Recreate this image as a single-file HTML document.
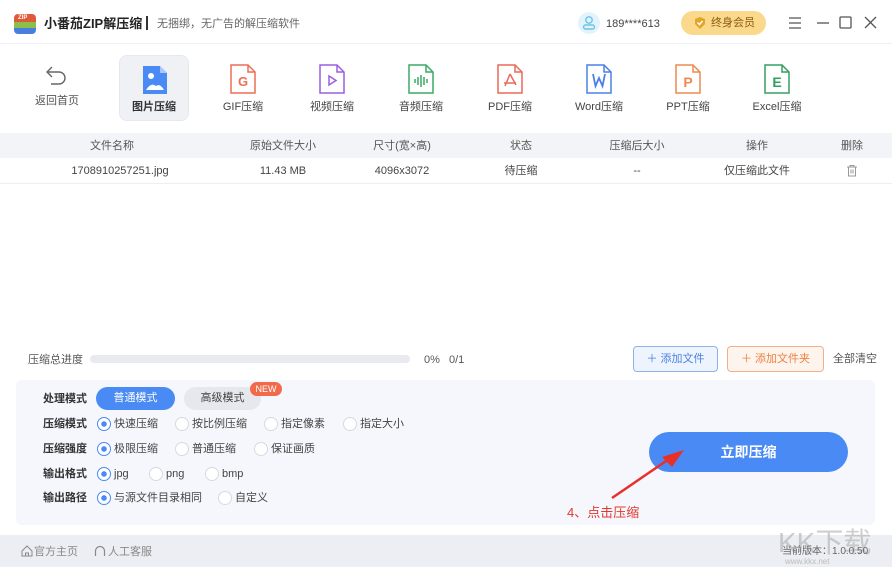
<!DOCTYPE html>
<html><head><meta charset="utf-8"><style>
*{margin:0;padding:0;box-sizing:border-box}
body{width:892px;height:567px;overflow:hidden;background:#fff;font-family:"Liberation Sans","Noto Sans CJK SC",sans-serif;font-size:12px;color:#333;position:relative}
.a{position:absolute}
.tb{left:0;top:0;width:892px;height:44px;background:#fff;border-bottom:1px solid #eef0f4}
.tool{position:absolute;top:55px;width:70px;height:66px;text-align:center}
.tool svg{position:absolute;left:21px;top:8px}
.tool span{position:absolute;left:0;right:0;top:45px;font-size:11px;color:#444;line-height:14px}
.th{top:133px;left:0;width:892px;height:25px;background:#f3f4f7;color:#555}
.row{top:158px;left:0;width:892px;height:26px;border-bottom:1px solid #eceef2;color:#444}
.c{position:absolute;top:6px;transform:translateX(-50%);white-space:nowrap;font-size:11px;line-height:14px}
.lbl{position:absolute;left:43px;font-weight:bold;font-size:11px;color:#333;line-height:14px}
.r{position:absolute;font-size:11px;color:#444;padding-left:17px;white-space:nowrap;line-height:14px}
.r:before{content:"";position:absolute;left:0;top:0;width:12px;height:12px;border:1px solid #d6d9e0;border-radius:50%;background:#fff}
.r.on:before{border-color:#4a8af4;background:radial-gradient(circle,#4a8af4 0 2.5px,#fff 3px)}
</style></head><body>
<div class="a tb"></div>
<div class="a" style="left:14px;top:14px;width:22px;height:20px;border-radius:4px;background:linear-gradient(#e05a3a 0 40%,#8bbf4a 40% 70%,#4a7de0 70%)"></div>
<div class="a" style="left:18px;top:15px;font-size:6px;color:#fff;font-weight:bold">ZIP</div>
<div class="a" style="left:44px;top:16px;font-size:13px;font-weight:bold;color:#222;line-height:16px">小番茄ZIP解压缩</div>
<div class="a" style="left:146px;top:16px;width:2px;height:14px;background:#333"></div>
<div class="a" style="left:157px;top:17px;font-size:11px;color:#666;line-height:14px">无捆绑，无广告的解压缩软件</div>
<div class="a" style="left:578px;top:12px;width:22px;height:22px;border-radius:50%;background:#e3f3fb"></div>
<svg class="a" style="left:582px;top:15px" width="14" height="15"><circle cx="7" cy="5" r="3.2" fill="none" stroke="#6cc3e8" stroke-width="1.4"/><rect x="1.5" y="10" width="11" height="4" rx="2" fill="none" stroke="#6cc3e8" stroke-width="1.4"/></svg>
<div class="a" style="left:606px;top:17px;font-size:11px;color:#444;line-height:14px">189****613</div>
<div class="a" style="left:681px;top:11px;width:85px;height:24px;border-radius:12px;background:#fbd98c"></div>
<svg class="a" style="left:693px;top:16px" width="14" height="14"><path d="M2 3 L7 1 L12 3 L12 8 L7 13 L2 8Z" fill="#e3a525"/><path d="M4.5 6.5 L6.5 8.5 L9.5 5" fill="none" stroke="#fff" stroke-width="1.5"/></svg>
<div class="a" style="left:711px;top:16px;font-size:11px;color:#8a5a10;line-height:14px">终身会员</div>
<svg class="a" style="left:788px;top:15px" width="90" height="16" fill="none" stroke="#555" stroke-width="1.3"><path d="M1 3h12M1 8h12M1 13h12"/><path d="M29 8h12"/><rect x="52" y="2" width="11" height="11" rx="1"/><path d="M77 2l11 11M88 2l-11 11"/></svg>

<div class="tool" style="left:22px"><svg width="26" height="26" fill="none" stroke="#666" stroke-width="1.4"><path d="M9 4 L4 9 L9 14"/><path d="M4 9 H16 a6 6 0 0 1 0 12 H8"/></svg><span style="color:#555;top:39px">返回首页</span></div>
<div class="tool" style="left:119px;background:#f0f1f5;border-radius:8px;border:1px solid #e6e8ee"><svg width="28" height="32"><path d="M2 2h17l7 7v21H2z" fill="#4a8af4"/><path d="M19 2v7h7" fill="#a9c8fb"/><circle cx="10" cy="12" r="3" fill="#fff"/><path d="M5 26 q5-8 10-4 q4-3 8 4z" fill="#fff"/></svg><span style="font-weight:bold;color:#333;top:44px">图片压缩</span></div>
<div class="tool" style="left:208px"><svg width="28" height="32" fill="none" stroke="#ec6f55" stroke-width="1.5"><path d="M2 2h17l7 7v21H2z"/><path d="M19 2v7h7"/><text x="14" y="23" text-anchor="middle" fill="#ec6f55" stroke="none" font-size="13" font-weight="bold" font-family="Liberation Sans">G</text></svg><span>GIF压缩</span></div>
<div class="tool" style="left:297px"><svg width="28" height="32" fill="none" stroke="#9a5fe0" stroke-width="1.5"><path d="M2 2h17l7 7v21H2z"/><path d="M19 2v7h7"/><path d="M11 13v9l7-4.5z"/></svg><span>视频压缩</span></div>
<div class="tool" style="left:386px"><svg width="28" height="32" fill="none" stroke="#3aaa64" stroke-width="1.5"><path d="M2 2h17l7 7v21H2z"/><path d="M19 2v7h7"/><path d="M8 16v4M11 14v8M14 12v12M17 14v8M20 16v4"/></svg><span>音频压缩</span></div>
<div class="tool" style="left:475px"><svg width="28" height="32" fill="none" stroke="#ea6a58" stroke-width="1.5"><path d="M2 2h17l7 7v21H2z"/><path d="M19 2v7h7"/><path d="M14 11 L9 23 M14 11 L20 22 M8 20 h12"/></svg><span>PDF压缩</span></div>
<div class="tool" style="left:564px"><svg width="28" height="32" fill="none" stroke="#4a80e8" stroke-width="1.5"><path d="M2 2h17l7 7v21H2z"/><path d="M19 2v7h7"/><path d="M8 11 L10.5 23 L14 15 L17.5 23 L20 11" stroke-width="1.8"/></svg><span>Word压缩</span></div>
<div class="tool" style="left:653px"><svg width="28" height="32" fill="none" stroke="#ee8a4e" stroke-width="1.5"><path d="M2 2h17l7 7v21H2z"/><path d="M19 2v7h7"/><text x="14" y="24" text-anchor="middle" fill="#ee8a4e" stroke="none" font-size="14" font-weight="bold" font-family="Liberation Sans">P</text></svg><span>PPT压缩</span></div>
<div class="tool" style="left:742px"><svg width="28" height="32" fill="none" stroke="#33a060" stroke-width="1.5"><path d="M2 2h17l7 7v21H2z"/><path d="M19 2v7h7"/><text x="14" y="24" text-anchor="middle" fill="#33a060" stroke="none" font-size="14" font-weight="bold" font-family="Liberation Sans">E</text></svg><span>Excel压缩</span></div>

<div class="a th"><span class="c" style="left:112px">文件名称</span><span class="c" style="left:283px">原始文件大小</span><span class="c" style="left:402px">尺寸(宽×高)</span><span class="c" style="left:521px">状态</span><span class="c" style="left:637px">压缩后大小</span><span class="c" style="left:757px">操作</span><span class="c" style="left:852px">删除</span></div>
<div class="a row"><span class="c" style="left:120px">1708910257251.jpg</span><span class="c" style="left:283px">11.43 MB</span><span class="c" style="left:402px">4096x3072</span><span class="c" style="left:521px">待压缩</span><span class="c" style="left:637px">--</span><span class="c" style="left:757px">仅压缩此文件</span>
<svg class="a" style="left:846px;top:6px" width="12" height="13" fill="none" stroke="#999" stroke-width="1"><path d="M1 3h10M4 3V1.5h4V3M2.5 3v9h7V3M5 5.5v4M7 5.5v4"/></svg></div>

<div class="a" style="left:28px;top:353px;font-size:11px;color:#555;line-height:14px">压缩总进度</div>
<div class="a" style="left:90px;top:355px;width:320px;height:8px;border-radius:4px;background:#e8eaef"></div>
<div class="a" style="left:424px;top:353px;font-size:11px;color:#555;line-height:14px">0%</div>
<div class="a" style="left:449px;top:353px;font-size:11px;color:#555;line-height:14px">0/1</div>
<div class="a" style="left:633px;top:346px;width:85px;height:26px;border:1px solid #8fb3e8;border-radius:4px;background:#eef4fd;color:#4a80e0;font-size:11px;text-align:center;line-height:24px">＋ 添加文件</div>
<div class="a" style="left:727px;top:346px;width:97px;height:26px;border:1px solid #f0b08a;border-radius:4px;background:#fdf4ee;color:#ee8040;font-size:11px;text-align:center;line-height:24px">＋ 添加文件夹</div>
<div class="a" style="left:833px;top:352px;font-size:11px;color:#555;line-height:14px">全部清空</div>

<div class="a" style="left:16px;top:380px;width:859px;height:145px;background:#f5f7fc;border-radius:6px"></div>
<div class="lbl" style="top:392px">处理模式</div>
<div class="a" style="left:96px;top:387px;width:79px;height:23px;border-radius:12px;background:#4a8af4;color:#fff;font-size:11px;text-align:center;line-height:23px">普通模式</div>
<div class="a" style="left:184px;top:387px;width:77px;height:23px;border-radius:12px;background:#e6e8ee;color:#444;font-size:11px;text-align:center;line-height:23px">高级模式</div>
<div class="a" style="left:250px;top:382px;width:32px;height:14px;border-radius:7px;background:#f26a4c;color:#fff;font-size:9px;text-align:center;line-height:14px">NEW</div>
<div class="lbl" style="top:417px">压缩模式</div>
<div class="r on" style="left:97px;top:417px">快速压缩</div><div class="r" style="left:175px;top:417px">按比例压缩</div><div class="r" style="left:264px;top:417px">指定像素</div><div class="r" style="left:343px;top:417px">指定大小</div>
<div class="lbl" style="top:442px">压缩强度</div>
<div class="r on" style="left:97px;top:442px">极限压缩</div><div class="r" style="left:175px;top:442px">普通压缩</div><div class="r" style="left:254px;top:442px">保证画质</div>
<div class="lbl" style="top:467px">输出格式</div>
<div class="r on" style="left:97px;top:467px">jpg</div><div class="r" style="left:149px;top:467px">png</div><div class="r" style="left:205px;top:467px">bmp</div>
<div class="lbl" style="top:491px">输出路径</div>
<div class="r on" style="left:97px;top:491px">与源文件目录相同</div><div class="r" style="left:218px;top:491px">自定义</div>

<div class="a" style="left:649px;top:432px;width:199px;height:40px;border-radius:20px;background:#4a8af4;color:#fff;font-size:14px;font-weight:bold;text-align:center;line-height:40px">立即压缩</div>
<svg class="a" style="left:600px;top:445px" width="90" height="60"><path d="M12 53 L72 12" stroke="#e8302a" stroke-width="2.5"/><path d="M84 5 L62 12 L72 22Z" fill="#e8302a"/></svg>
<div class="a" style="left:567px;top:504px;font-size:13px;color:#e03a30;line-height:17px">4、点击压缩</div>

<div class="a" style="left:0;top:535px;width:892px;height:32px;background:#eceef3"></div>
<svg class="a" style="left:21px;top:545px" width="12" height="12" fill="none" stroke="#888" stroke-width="1"><path d="M1 6 L6 1 L11 6 V11 H1Z M4.5 11V8h3v3"/></svg>
<div class="a" style="left:34px;top:545px;font-size:11px;color:#888;line-height:14px">官方主页</div>
<svg class="a" style="left:94px;top:545px" width="12" height="12" fill="none" stroke="#888" stroke-width="1.2"><path d="M1.5 11V6a4.5 4.5 0 0 1 9 0v5"/></svg>
<div class="a" style="left:108px;top:545px;font-size:11px;color:#888;line-height:14px">人工客服</div>
<div class="a" style="left:778px;top:527px;font-size:28px;color:rgba(160,160,160,.5);line-height:32px">KK下载</div>
<div class="a" style="left:782px;top:546px;font-size:10px;color:#666;line-height:12px">当前版本：1.0.0.50</div>
<div class="a" style="left:785px;top:557px;font-size:8px;color:#bbb;line-height:10px">www.kkx.net</div>
</body></html>
